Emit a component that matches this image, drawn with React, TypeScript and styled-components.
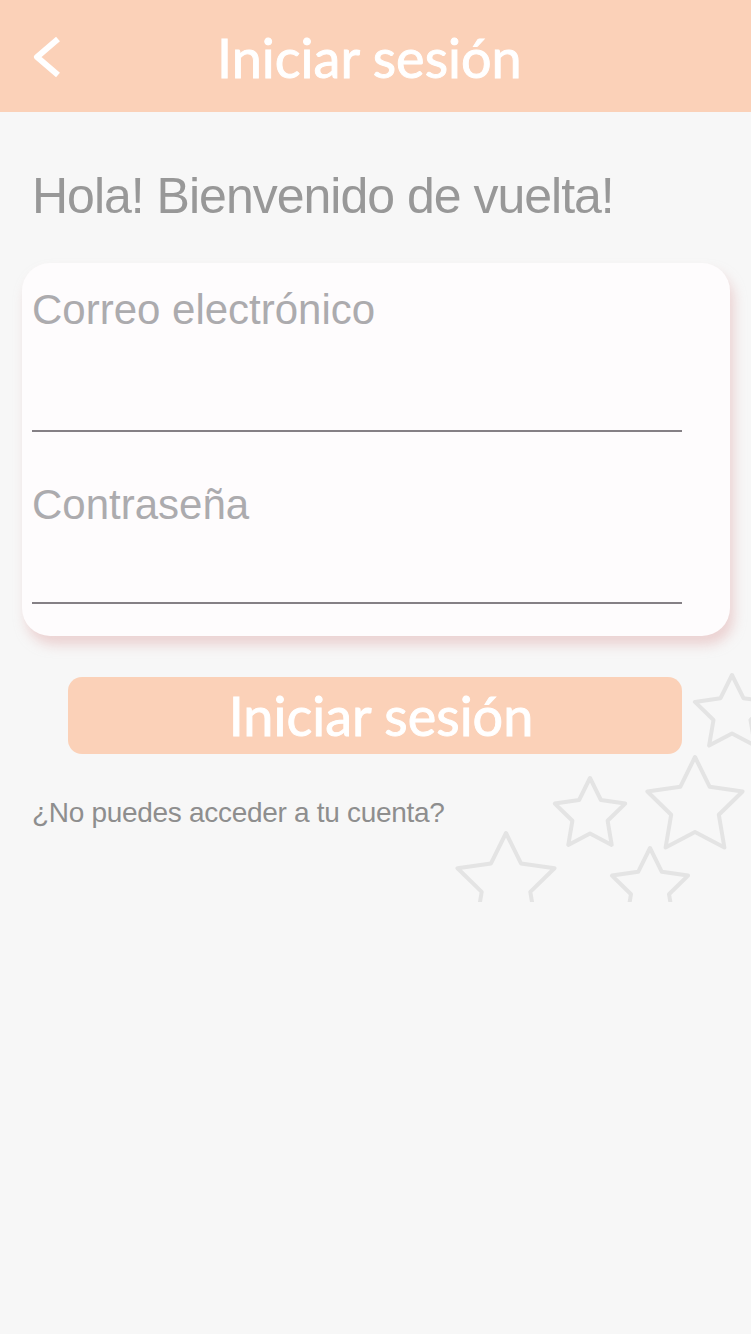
import React from 'react'
import styled, { createGlobalStyle } from 'styled-components'

const GlobalStyle = createGlobalStyle`
  html, body {
    margin: 0;
    padding: 0;
    background: #f7f7f7;
  }
  body {
    font-family: 'Liberation Sans', Arial, sans-serif;
    overflow-x: hidden;
  }
`

const PEACH = '#fbd1b8'

const Page = styled.div`
  position: relative;
  width: 751px;
  min-height: 1334px;
  background: #f7f7f7;
`

const Header = styled.header`
  height: 112px;
  background: ${PEACH};
  display: flex;
  align-items: center;
  padding-left: 28px;
  box-sizing: border-box;
`

const BackButton = styled.button`
  display: flex;
  align-items: center;
  width: 36px;
  height: 52px;
  padding: 0;
  border: none;
  background: transparent;
  cursor: pointer;
`

const Title = styled.h1`
  margin: 2px 0 0 153px;
  font-family: Lato, 'Open Sans', sans-serif;
  font-weight: 400;
  font-size: 54px;
  line-height: 55px;
  color: #ffffff;
  -webkit-text-stroke: 0.9px #ffffff;
`

const Content = styled.main`
  padding: 58px 21px 0 22px;
  display: flex;
  flex-direction: column;
`

const Greeting = styled.h2`
  margin: 0 0 0 10px;
  font-family: 'Liberation Sans', Arial, sans-serif;
  font-weight: 400;
  font-size: 50px;
  line-height: 53px;
  letter-spacing: -1px;
  color: #989898;
`

const Card = styled.form`
  margin-top: 40px;
  width: 708px;
  box-sizing: border-box;
  padding: 26px 0 32px 10px;
  background: #fefcfd;
  border-radius: 28px;
  box-shadow: 4px 9px 12px rgba(226, 176, 176, 0.5);
  display: flex;
  flex-direction: column;
`

const Label = styled.label<{ $gap?: number }>`
  margin-top: ${p => p.$gap ?? 0}px;
  font-size: 42px;
  line-height: 42px;
  color: #acabae;
`

const Field = styled.input<{ $height: number }>`
  display: block;
  width: 650px;
  height: ${p => p.$height}px;
  box-sizing: border-box;
  padding: 0;
  border: none;
  border-bottom: 2px solid #858085;
  background: transparent;
  outline: none;
  font-family: 'Liberation Sans', Arial, sans-serif;
  font-size: 30px;
  color: #777;
`

const SubmitButton = styled.button`
  margin: 41px 0 0 46px;
  width: 614px;
  height: 77px;
  border: none;
  border-radius: 14px;
  background: ${PEACH};
  color: #ffffff;
  font-family: Lato, 'Open Sans', sans-serif;
  font-weight: 400;
  font-size: 54px;
  line-height: 55px;
  -webkit-text-stroke: 0.9px #ffffff;
  padding: 0 0 0 12px;
  cursor: pointer;
`

const HelpLink = styled.a`
  margin: 45px 0 0 10px;
  font-size: 28px;
  line-height: 28px;
  letter-spacing: -0.3px;
  color: #8e8e8e;
  text-decoration: none;
`

const Stars = styled.svg`
  position: absolute;
  left: 440px;
  top: 660px;
  pointer-events: none;
`

const stars = [
  { cx: 292, cy: 54, r: 39 },
  { cx: 255, cy: 147, r: 50 },
  { cx: 150, cy: 155, r: 37 },
  { cx: 66, cy: 224, r: 51 },
  { cx: 210, cy: 228, r: 40 }
]

function starPoints (cx: number, cy: number, r: number): string {
  const pts: string[] = []
  for (let i = 0; i < 10; i++) {
    const rad = i % 2 === 0 ? r : r * 0.5
    const a = -Math.PI / 2 + (i * Math.PI) / 5
    pts.push(`${(cx + rad * Math.cos(a)).toFixed(1)},${(cy + rad * Math.sin(a)).toFixed(1)}`)
  }
  return pts.join(' ')
}

export default function App (): JSX.Element {
  return (
    <Page>
      <GlobalStyle />
      <Header>
        <BackButton aria-label="Volver">
          <svg width="36" height="52" viewBox="0 0 36 52">
            <path d="M30 9 L9 27 L30 45" fill="none" stroke="#ffffff" strokeWidth="6" strokeLinejoin="round" />
          </svg>
        </BackButton>
        <Title>Iniciar sesión</Title>
      </Header>
      <Content>
        <Greeting>Hola! Bienvenido de vuelta!</Greeting>
        <Card onSubmit={e => e.preventDefault()}>
          <Label htmlFor="email">Correo electrónico</Label>
          <Field id="email" type="email" $height={101} />
          <Label htmlFor="password" $gap={52}>Contraseña</Label>
          <Field id="password" type="password" $height={78} />
        </Card>
        <SubmitButton type="button">Iniciar sesión</SubmitButton>
        <HelpLink href="#">¿No puedes acceder a tu cuenta?</HelpLink>
      </Content>
      <Stars width="311" height="242" viewBox="0 0 311 242">
        {stars.map((s, i) => (
          <polygon
            key={i}
            points={starPoints(s.cx, s.cy, s.r)}
            fill="none"
            stroke="#e4e4e4"
            strokeWidth="4"
            strokeLinejoin="round"
          />
        ))}
      </Stars>
    </Page>
  )
}
